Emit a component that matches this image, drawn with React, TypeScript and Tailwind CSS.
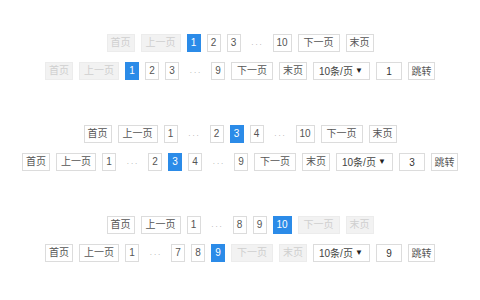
import React from 'react';

type Item =
  | { kind: 'btn'; label: string; w: string; disabled?: boolean; active?: boolean }
  | { kind: 'dots' };

const b = (label: string, w: string, opts: { disabled?: boolean; active?: boolean } = {}): Item => ({
  kind: 'btn',
  label,
  w,
  ...opts,
});
const dots: Item = { kind: 'dots' };
const num = (n: number, active = false) => b(String(n), n >= 10 ? 'w-[19px]' : 'w-[14px]', { active });

const PageItem: React.FC<{ item: Item }> = ({ item }) => {
  if (item.kind === 'dots') {
    return <span className="w-[20px] h-[18px] flex items-center justify-center text-[8px] tracking-[2px] pl-[2px] text-[#aaa]">...</span>;
  }
  let cls = 'border-[#dcdcdc] bg-white text-[#555]';
  if (item.disabled) cls = 'border-[#ececec] bg-[#f2f2f2] text-[#cfcfcf]';
  if (item.active) cls = 'border-[#2b8be8] bg-[#2b8be8] text-white';
  return (
    <span className={`${item.w} h-[18px] border flex items-center justify-center text-[10px] leading-none ${cls}`}>
      {item.label}
    </span>
  );
};

const Extras: React.FC<{ page: number }> = ({ page }) => (
  <>
    <span className="w-[57px] h-[18px] border border-[#dcdcdc] bg-white flex items-center justify-between pl-[5px] pr-[6px] text-[10px] text-[#444]">
      <span>10条/页</span>
      <span className="text-[8px] text-[#222]">▼</span>
    </span>
    <span className="w-[26px] h-[18px] border border-[#dcdcdc] bg-white flex items-center justify-center text-[10px] text-[#333]">
      {page}
    </span>
    <span className="w-[27px] h-[18px] border border-[#dcdcdc] bg-white flex items-center justify-center text-[10px] text-[#555]">
      跳转
    </span>
  </>
);

const Row: React.FC<{ items: Item[]; extra?: number }> = ({ items, extra }) => (
  <div className="flex justify-center gap-[6px]">
    {items.map((it, i) => (
      <PageItem key={i} item={it} />
    ))}
    {extra !== undefined && <Extras page={extra} />}
  </div>
);

export default function App() {
  const first = b('首页', 'w-[28px]');
  const prev = b('上一页', 'w-[40px]');
  const next = b('下一页', 'w-[42px]');
  const last = b('末页', 'w-[28px]');
  const dis = (it: Item): Item => (it.kind === 'btn' ? { ...it, disabled: true } : it);

  return (
    <div
      className="w-[480px] h-[300px] bg-white pt-[34px] flex flex-col"
      style={{ fontFamily: '"Liberation Sans", "Noto Sans CJK SC", sans-serif' }}
    >
      <div className="flex flex-col gap-[10px]">
        <Row items={[dis(first), dis(prev), num(1, true), num(2), num(3), dots, num(10), next, last]} />
        <Row items={[dis(first), dis(prev), num(1, true), num(2), num(3), dots, num(9), next, last]} extra={1} />
      </div>
      <div className="flex flex-col gap-[10px] mt-[45px]">
        <Row items={[first, prev, num(1), dots, num(2), num(3, true), num(4), dots, num(10), next, last]} />
        <Row items={[first, prev, num(1), dots, num(2), num(3, true), num(4), dots, num(9), next, last]} extra={3} />
      </div>
      <div className="flex flex-col gap-[10px] mt-[45px]">
        <Row items={[first, prev, num(1), dots, num(8), num(9), num(10, true), dis(next), dis(last)]} />
        <Row items={[first, prev, num(1), dots, num(7), num(8), num(9, true), dis(next), dis(last)]} extra={9} />
      </div>
    </div>
  );
}
